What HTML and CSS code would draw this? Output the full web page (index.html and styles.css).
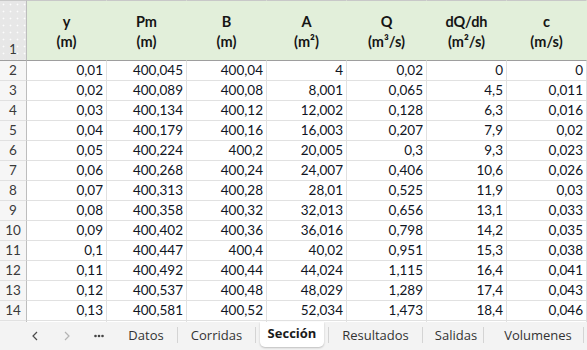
FILE: index.html
```html
<!DOCTYPE html>
<html lang="es">
<head>
<meta charset="utf-8">
<title>Sección</title>
<link rel="stylesheet" href="styles.css">
</head>
<body>
<div class="app">
  <div class="sheet">
    <div class="rh rh-top">1</div>
    <div class="hd"><span>y</span><span>(m)</span></div>
    <div class="hd"><span>Pm</span><span>(m)</span></div>
    <div class="hd"><span>B</span><span>(m)</span></div>
    <div class="hd"><span>A</span><span>(m²)</span></div>
    <div class="hd"><span>Q</span><span>(m³/s)</span></div>
    <div class="hd"><span>dQ/dh</span><span>(m²/s)</span></div>
    <div class="hd"><span>c</span><span>(m/s)</span></div>

    <div class="rh">2</div><div class="c">0,01</div><div class="c">400,045</div><div class="c">400,04</div><div class="c">4</div><div class="c">0,02</div><div class="c">0</div><div class="c">0</div>
    <div class="rh">3</div><div class="c">0,02</div><div class="c">400,089</div><div class="c">400,08</div><div class="c">8,001</div><div class="c">0,065</div><div class="c">4,5</div><div class="c">0,011</div>
    <div class="rh">4</div><div class="c">0,03</div><div class="c">400,134</div><div class="c">400,12</div><div class="c">12,002</div><div class="c">0,128</div><div class="c">6,3</div><div class="c">0,016</div>
    <div class="rh">5</div><div class="c">0,04</div><div class="c">400,179</div><div class="c">400,16</div><div class="c">16,003</div><div class="c">0,207</div><div class="c">7,9</div><div class="c">0,02</div>
    <div class="rh">6</div><div class="c">0,05</div><div class="c">400,224</div><div class="c">400,2</div><div class="c">20,005</div><div class="c">0,3</div><div class="c">9,3</div><div class="c">0,023</div>
    <div class="rh">7</div><div class="c">0,06</div><div class="c">400,268</div><div class="c">400,24</div><div class="c">24,007</div><div class="c">0,406</div><div class="c">10,6</div><div class="c">0,026</div>
    <div class="rh">8</div><div class="c">0,07</div><div class="c">400,313</div><div class="c">400,28</div><div class="c">28,01</div><div class="c">0,525</div><div class="c">11,9</div><div class="c">0,03</div>
    <div class="rh">9</div><div class="c">0,08</div><div class="c">400,358</div><div class="c">400,32</div><div class="c">32,013</div><div class="c">0,656</div><div class="c">13,1</div><div class="c">0,033</div>
    <div class="rh">10</div><div class="c">0,09</div><div class="c">400,402</div><div class="c">400,36</div><div class="c">36,016</div><div class="c">0,798</div><div class="c">14,2</div><div class="c">0,035</div>
    <div class="rh">11</div><div class="c">0,1</div><div class="c">400,447</div><div class="c">400,4</div><div class="c">40,02</div><div class="c">0,951</div><div class="c">15,3</div><div class="c">0,038</div>
    <div class="rh">12</div><div class="c">0,11</div><div class="c">400,492</div><div class="c">400,44</div><div class="c">44,024</div><div class="c">1,115</div><div class="c">16,4</div><div class="c">0,041</div>
    <div class="rh">13</div><div class="c">0,12</div><div class="c">400,537</div><div class="c">400,48</div><div class="c">48,029</div><div class="c">1,289</div><div class="c">17,4</div><div class="c">0,043</div>
    <div class="rh">14</div><div class="c">0,13</div><div class="c">400,581</div><div class="c">400,52</div><div class="c">52,034</div><div class="c">1,473</div><div class="c">18,4</div><div class="c">0,046</div>
    <div class="rh"></div><div class="c"></div><div class="c"></div><div class="c"></div><div class="c"></div><div class="c"></div><div class="c"></div><div class="c"></div>
  </div>

  <div class="tabbar">
    <div class="nav">
      <span class="navbtn">
        <svg width="8" height="10" viewBox="0 0 8 10"><polyline points="6,1 2,5 6,9" fill="none" stroke="#4a4a4a" stroke-width="1.2"/></svg>
      </span>
      <span class="navbtn">
        <svg width="8" height="10" viewBox="0 0 8 10"><polyline points="2,1 6,5 2,9" fill="none" stroke="#b4b4b4" stroke-width="1.2"/></svg>
      </span>
      <span class="navbtn">
        <svg width="10" height="4" viewBox="0 0 10 4"><circle cx="1.5" cy="2" r="1.3" fill="#444"/><circle cx="5" cy="2" r="1.3" fill="#444"/><circle cx="8.5" cy="2" r="1.3" fill="#444"/></svg>
      </span>
    </div>
    <div class="tab t-datos">Datos</div>
    <span class="sep"></span>
    <div class="tab t-corridas">Corridas</div>
    <span class="sep"></span>
    <div class="tab t-seccion"><span class="active">Sección</span></div>
    <span class="sep"></span>
    <div class="tab t-resultados">Resultados</div>
    <span class="sep"></span>
    <div class="tab t-salidas">Salidas</div>
    <span class="sep"></span>
    <div class="tab t-volumenes">Volumenes</div>
    <span class="sep"></span>
  </div>
</div>
</body>
</html>
```

FILE: styles.css
```css
html, body {
  margin: 0;
  padding: 0;
  background: #ffffff;
  overflow: hidden;
}

.app {
  width: 587px;
  height: 350px;
  display: flex;
  flex-direction: column;
}

.sheet {
  height: 322px;
  overflow: hidden;
  display: grid;
  grid-template-columns: 27px repeat(7, 80px);
  grid-template-rows: 61px repeat(14, 20px);
  font-family: Lato, "Liberation Sans", sans-serif;
  font-size: 13.5px;
  color: #10151f;
}

.sheet > div {
  box-sizing: border-box;
  border-right: 1px solid #e1e1e1;
  border-bottom: 1px solid #e1e1e1;
}

.rh {
  background: #f6f6f6;
  color: #3a3a3a;
  display: flex;
  align-items: center;
  justify-content: center;
  line-height: 19px;
  font-size: 13.5px;
}

.sheet > .rh {
  border-right: 1px solid #bdbdbd;
  border-bottom: 1px solid #e1e1e1;
}

.sheet > .rh-top {
  background-color: #e7e7e7;
  background-image: radial-gradient(circle, rgba(255,255,255,0.9) 0.8px, transparent 1.1px);
  background-size: 7px 7px;
  align-items: flex-end;
  padding-bottom: 1px;
  border-top: 1px solid #c8c8c8;
  border-bottom: 1px solid #9e9e9e;
}

.sheet > .hd {
  background: #e2efda;
  border-top: 1px solid #c8c8c8;
  border-bottom: 1px solid #9e9e9e;
  border-right: 1px solid #e2efda;
  display: flex;
  flex-direction: column;
  align-items: center;
  justify-content: center;
  padding-top: 3px;
  font-weight: 700;
  font-size: 14.5px;
  line-height: 20px;
  color: #151515;
}

.c {
  display: flex;
  align-items: center;
  justify-content: flex-end;
  padding-right: 3px;
  line-height: 19px;
}

.tabbar {
  flex: 1;
  display: flex;
  align-items: stretch;
  background: #f3f3f3;
  font-family: "Open Sans", "Noto Sans", sans-serif;
  font-size: 13px;
  color: #333333;
}

.nav {
  display: flex;
  padding-left: 19px;
}

.navbtn {
  width: 32px;
  display: flex;
  align-items: center;
  justify-content: center;
}

.tab {
  display: flex;
  align-items: center;
  justify-content: center;
  padding-bottom: 2px;
  box-sizing: border-box;
}

.t-datos { width: 62px; }
.t-corridas { width: 77px; }
.t-seccion { width: 72px; padding-bottom: 0; align-items: stretch; }
.t-resultados { width: 93px; }
.t-salidas { width: 60px; padding-left: 6px; }
.t-volumenes { width: 99px; padding-left: 9px; }

.active {
  flex: 1;
  margin: 0 4px 3px 4px;
  background: #ffffff;
  border-radius: 0 0 5px 5px;
  box-shadow: 0 1px 2px rgba(0, 0, 0, 0.22);
  display: flex;
  align-items: center;
  justify-content: center;
  padding-bottom: 3px;
  font-weight: 700;
  color: #1a1a1a;
}

.sep {
  width: 1px;
  height: 16px;
  align-self: center;
  background: #d4d4d4;
  margin-bottom: 2px;
}
```
